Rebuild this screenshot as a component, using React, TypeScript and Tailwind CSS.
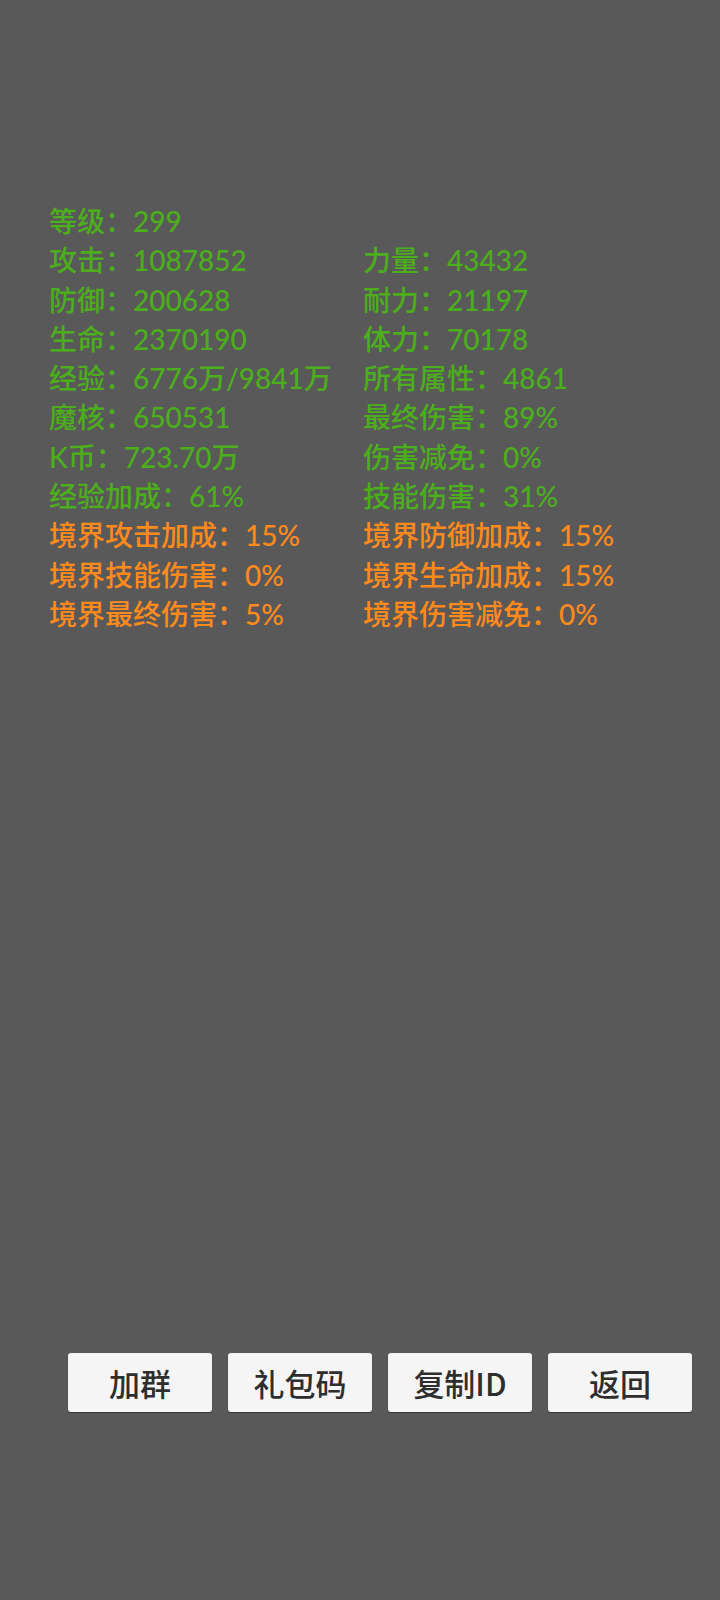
import React from 'react';

type Stat = { label: string; value: string; tone: 'green' | 'orange' };

const rows: [Stat, Stat | null][] = [
  [{ label: '等级', value: '299', tone: 'green' }, null],
  [{ label: '攻击', value: '1087852', tone: 'green' }, { label: '力量', value: '43432', tone: 'green' }],
  [{ label: '防御', value: '200628', tone: 'green' }, { label: '耐力', value: '21197', tone: 'green' }],
  [{ label: '生命', value: '2370190', tone: 'green' }, { label: '体力', value: '70178', tone: 'green' }],
  [{ label: '经验', value: '6776万/9841万', tone: 'green' }, { label: '所有属性', value: '4861', tone: 'green' }],
  [{ label: '魔核', value: '650531', tone: 'green' }, { label: '最终伤害', value: '89%', tone: 'green' }],
  [{ label: 'K币', value: '723.70万', tone: 'green' }, { label: '伤害减免', value: '0%', tone: 'green' }],
  [{ label: '经验加成', value: '61%', tone: 'green' }, { label: '技能伤害', value: '31%', tone: 'green' }],
  [{ label: '境界攻击加成', value: '15%', tone: 'orange' }, { label: '境界防御加成', value: '15%', tone: 'orange' }],
  [{ label: '境界技能伤害', value: '0%', tone: 'orange' }, { label: '境界生命加成', value: '15%', tone: 'orange' }],
  [{ label: '境界最终伤害', value: '5%', tone: 'orange' }, { label: '境界伤害减免', value: '0%', tone: 'orange' }],
];

const buttons = ['加群', '礼包码', '复制ID', '返回'];

function StatText({ stat }: { stat: Stat | null }) {
  if (!stat) return <div />;
  return (
    <div className={stat.tone === 'green' ? 'text-[#4cae1c] whitespace-nowrap' : 'text-[#ff8a1c] whitespace-nowrap'}>
      {stat.label}：{stat.value}
    </div>
  );
}

export default function App() {
  return (
    <div
      className="min-h-[1600px] w-[720px] bg-[#595959] flex flex-col"
      style={{ fontFamily: 'Lato, "Noto Sans CJK SC", sans-serif' }}
    >
      <div className="pt-[202px] pl-[49px] grid grid-cols-[314px_1fr] text-[28px] leading-[39.3px] font-medium">
        {rows.map(([a, b], i) => (
          <React.Fragment key={i}>
            <StatText stat={a} />
            <StatText stat={b} />
          </React.Fragment>
        ))}
      </div>

      <div className="mt-[719px] ml-[68px] flex gap-[16px]">
        {buttons.map((b) => (
          <button
            key={b}
            type="button"
            className="w-[144px] h-[59px] rounded-[3px] bg-[#f5f5f5] text-[#2e2e2e] text-[31px] font-medium leading-none flex items-center justify-center shadow-[0_1px_1px_rgba(0,0,0,0.35)]"
            style={{ fontFamily: '"Noto Sans CJK SC", sans-serif' }}
          >
            {b}
          </button>
        ))}
      </div>
    </div>
  );
}
